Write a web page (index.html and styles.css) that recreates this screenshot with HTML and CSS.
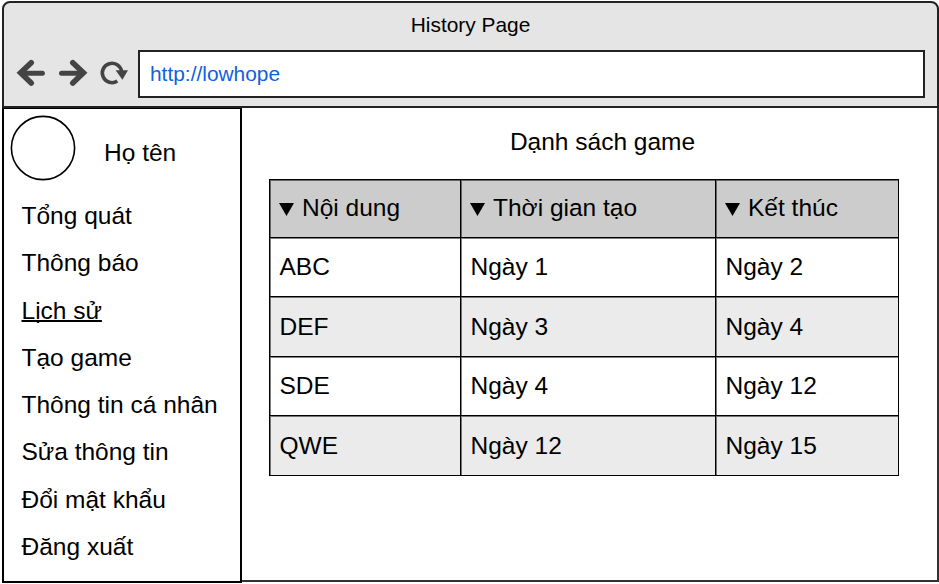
FILE: index.html
```html
<!DOCTYPE html>
<html lang="vi">
<head>
<meta charset="utf-8">
<title>History Page</title>
<link rel="stylesheet" href="styles.css">
</head>
<body>
<div class="window">
  <header class="chrome">
    <h1 class="title">History Page</h1>
    <div class="toolbar">
      <svg class="nav-icons" width="116" height="32" viewBox="14 57 116 32" fill="none" stroke="#444" stroke-linecap="round">
        <path d="M22 73.2H42.4" stroke-width="5"/>
        <path d="M31.2 62.7L20.6 72.8L31.2 83" stroke-width="5.6" stroke-linejoin="miter"/>
        <path d="M61.5 73.2H82" stroke-width="5"/>
        <path d="M72.8 62.7L83.4 72.8L72.8 83" stroke-width="5.6" stroke-linejoin="miter"/>
        <path d="M121.6 71.5A9.7 9.7 0 1 0 117.3 81.1" stroke-width="3.6" stroke-linecap="butt"/>
        <path d="M115.6 70.2H128L122.4 79.8Z" fill="#444" stroke="none"/>
      </svg>
      <div class="address">http://lowhope</div>
    </div>
  </header>
  <div class="body">
    <aside class="sidebar">
      <div class="profile">
        <svg class="avatar" width="66" height="66" viewBox="0 0 66 66"><circle cx="33" cy="33" r="31.6" fill="#fff" stroke="#000" stroke-width="1.6"/></svg>
        <span class="name">Họ tên</span>
      </div>
      <nav class="menu">
        <a>Tổng quát</a>
        <a>Thông báo</a>
        <a class="current">Lịch sử</a>
        <a>Tạo game</a>
        <a>Thông tin cá nhân</a>
        <a>Sửa thông tin</a>
        <a>Đổi mật khẩu</a>
        <a>Đăng xuất</a>
      </nav>
    </aside>
    <main class="content">
      <h2 class="heading">Dạnh sách game</h2>
      <div class="table">
        <div class="cell head"><i class="sort"></i>Nội dung</div>
        <div class="cell head"><i class="sort"></i>Thời gian tạo</div>
        <div class="cell head"><i class="sort"></i>Kết thúc</div>
        <div class="cell">ABC</div><div class="cell">Ngày 1</div><div class="cell">Ngày 2</div>
        <div class="cell alt">DEF</div><div class="cell alt">Ngày 3</div><div class="cell alt">Ngày 4</div>
        <div class="cell">SDE</div><div class="cell">Ngày 4</div><div class="cell">Ngày 12</div>
        <div class="cell alt">QWE</div><div class="cell alt">Ngày 12</div><div class="cell alt">Ngày 15</div>
      </div>
    </main>
  </div>
</div>
</body>
</html>
```
FILE: styles.css
```css
* { box-sizing: border-box; }

body {
  margin: 0;
  padding: 1px 0 0 2px;
  height: 584px;
  overflow: hidden;
  background: #fff;
  color: #000;
  font: 24.5px/28px "Liberation Sans", Arial, sans-serif;
}

h1, h2 { margin: 0; font-weight: 400; }

.window {
  display: flex;
  flex-direction: column;
  width: 937px;
  height: 582px;
}

.chrome {
  height: 107px;
  border: 2px solid #222;
  border-radius: 8px 8px 0 0;
  background: #e5e5e5;
}

.title {
  padding-top: 10px;
  text-align: center;
  font-size: 20.9px;
  line-height: 24px;
}

.toolbar {
  display: flex;
  padding: 13px 12px 0 10px;
}

.nav-icons { margin-top: 7px; }

.address {
  flex: 1;
  height: 48px;
  margin-left: 8px;
  padding-left: 10px;
  border: 2px solid #222;
  background: #fff;
  color: #1060e0;
  font-size: 20.9px;
  line-height: 44px;
}

.body { display: flex; height: 475px; }

.sidebar {
  width: 240px;
  border: 2px solid #000;
  border-top-width: 1px;
}

.profile {
  display: flex;
  height: 72px;
  padding: 6px 0 0 6px;
}

.name { margin: 24px 0 0 28px; }

.menu {
  display: flex;
  flex-direction: column;
  padding: 11px 0 0 17.5px;
}

.menu a { height: 47.25px; line-height: 47.25px; white-space: nowrap; }

.current {
  text-decoration: underline;
  text-decoration-thickness: 1.6px;
  text-decoration-skip-ink: none;
}

.content {
  flex: 1;
  height: 474px;
  padding: 20px 0 0 27px;
  border: solid #333;
  border-width: 0 2px 2px 0;
}

.heading {
  width: 667px;
  text-align: center;
  font-size: 24.5px;
  line-height: 28px;
}

.table {
  display: grid;
  grid-template-columns: 191px 255px 183px;
  grid-template-rows: 58px 59px 60px 59px 60px;
  width: 630px;
  margin-top: 23px;
  border: solid #000;
  border-width: 0 1px 1px 0;
}

.cell {
  display: flex;
  align-items: center;
  padding: 0 0 0 9.5px;
  border: solid #000;
  border-width: 1px 0 0 1px;
  box-shadow: inset 1px 1px rgba(0, 0, 0, 0.5);
}

.head { padding: 0 0 1px 8px; background: #ccc; }
.alt { background: #ebebeb; }

.sort {
  width: 15px;
  height: 13px;
  margin: 3px 8px 0 1px;
  background: #000;
  clip-path: polygon(0 0, 100% 0, 50% 100%);
}
```
